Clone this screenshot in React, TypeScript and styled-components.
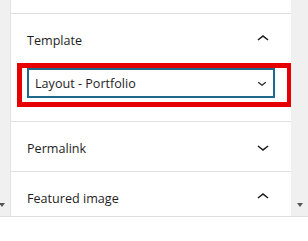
import styled, { createGlobalStyle } from "styled-components";

const GlobalStyle = createGlobalStyle`
  body {
    margin: 0;
    background: #fff;
    font-family: "Open Sans", "Noto Sans", sans-serif;
    color: #1e1e1e;
  }
`;

const Frame = styled.div`
  width: 308px;
  height: 241px;
  background: #fff;
`;

const Window = styled.div`
  display: flex;
  height: 217px;
  box-sizing: border-box;
  border-bottom: 1px solid #dedede;
`;

const ScrollStrip = styled.div<{ $w: number; $edge?: boolean }>`
  width: ${(p) => p.$w}px;
  flex-shrink: 0;
  background: #f0f0f0;
  border-right: ${(p) => (p.$edge ? "1px solid #e2e2e2" : "none")};
  display: flex;
  flex-direction: column;
  justify-content: flex-end;
  align-items: ${(p) => (p.$edge ? "flex-start" : "center")};
  padding-bottom: 9px;
  box-sizing: content-box;
`;

const Arrow = styled.div<{ $shift?: number }>`
  width: 0;
  height: 0;
  margin-left: ${(p) => p.$shift ?? 0}px;
  border-left: 3.5px solid transparent;
  border-right: 3.5px solid transparent;
  border-top: 4px solid #555;
`;

const Panel = styled.div`
  flex: 1;
  padding-top: 13px;
  overflow: hidden;
  background: #fff;
`;

const Section = styled.div`
  border-top: 1px solid #e0e0e0;
`;

const Header = styled.div`
  height: 49px;
  display: flex;
  align-items: center;
  justify-content: space-between;
  padding: 0 16px;
  font-size: 12.6px;
`;

const Title = styled.span`
  padding-top: 3px;
`;

const Body = styled.div`
  padding: 0 0 14px 6px;
`;

const Highlight = styled.div`
  margin-right: -1px;
  border: 5px solid #e60000;
  padding: 0 12px 4px 5px;
`;

const Select = styled.div`
  height: 30px;
  box-sizing: border-box;
  border: 2px solid #1d6a8c;
  display: flex;
  align-items: center;
  justify-content: space-between;
  padding: 0 2px 0 6px;
  font-size: 12.6px;
  background: #fff;
`;

const Chevron = ({ up, size = 24 }: { up?: boolean; size?: number }) => (
  <svg width={size} height={size} viewBox="0 0 24 24" fill="#1e1e1e">
    {up ? (
      <path d="M6.5 12.4L12 8l5.5 4.4-.9 1.2L12 10l-4.6 3.6-1-1.2z" />
    ) : (
      <path d="M17.5 11.6L12 16l-5.5-4.4.9-1.2L12 14l4.6-3.6 1 1.2z" />
    )}
  </svg>
);

export default function App() {
  return (
    <Frame>
      <GlobalStyle />
      <Window>
        <ScrollStrip $w={10} $edge>
          <Arrow $shift={-1} />
        </ScrollStrip>
        <Panel>
          <Section>
            <Header>
              <Title>Template</Title>
              <Chevron up />
            </Header>
            <Body>
              <Highlight>
                <Select>
                  Layout - Portfolio
                  <Chevron size={18} />
                </Select>
              </Highlight>
            </Body>
          </Section>
          <Section>
            <Header>
              <Title>Permalink</Title>
              <Chevron />
            </Header>
          </Section>
          <Section>
            <Header>
              <Title>Featured image</Title>
              <Chevron up />
            </Header>
          </Section>
        </Panel>
        <ScrollStrip $w={17}>
          <Arrow />
        </ScrollStrip>
      </Window>
    </Frame>
  );
}
